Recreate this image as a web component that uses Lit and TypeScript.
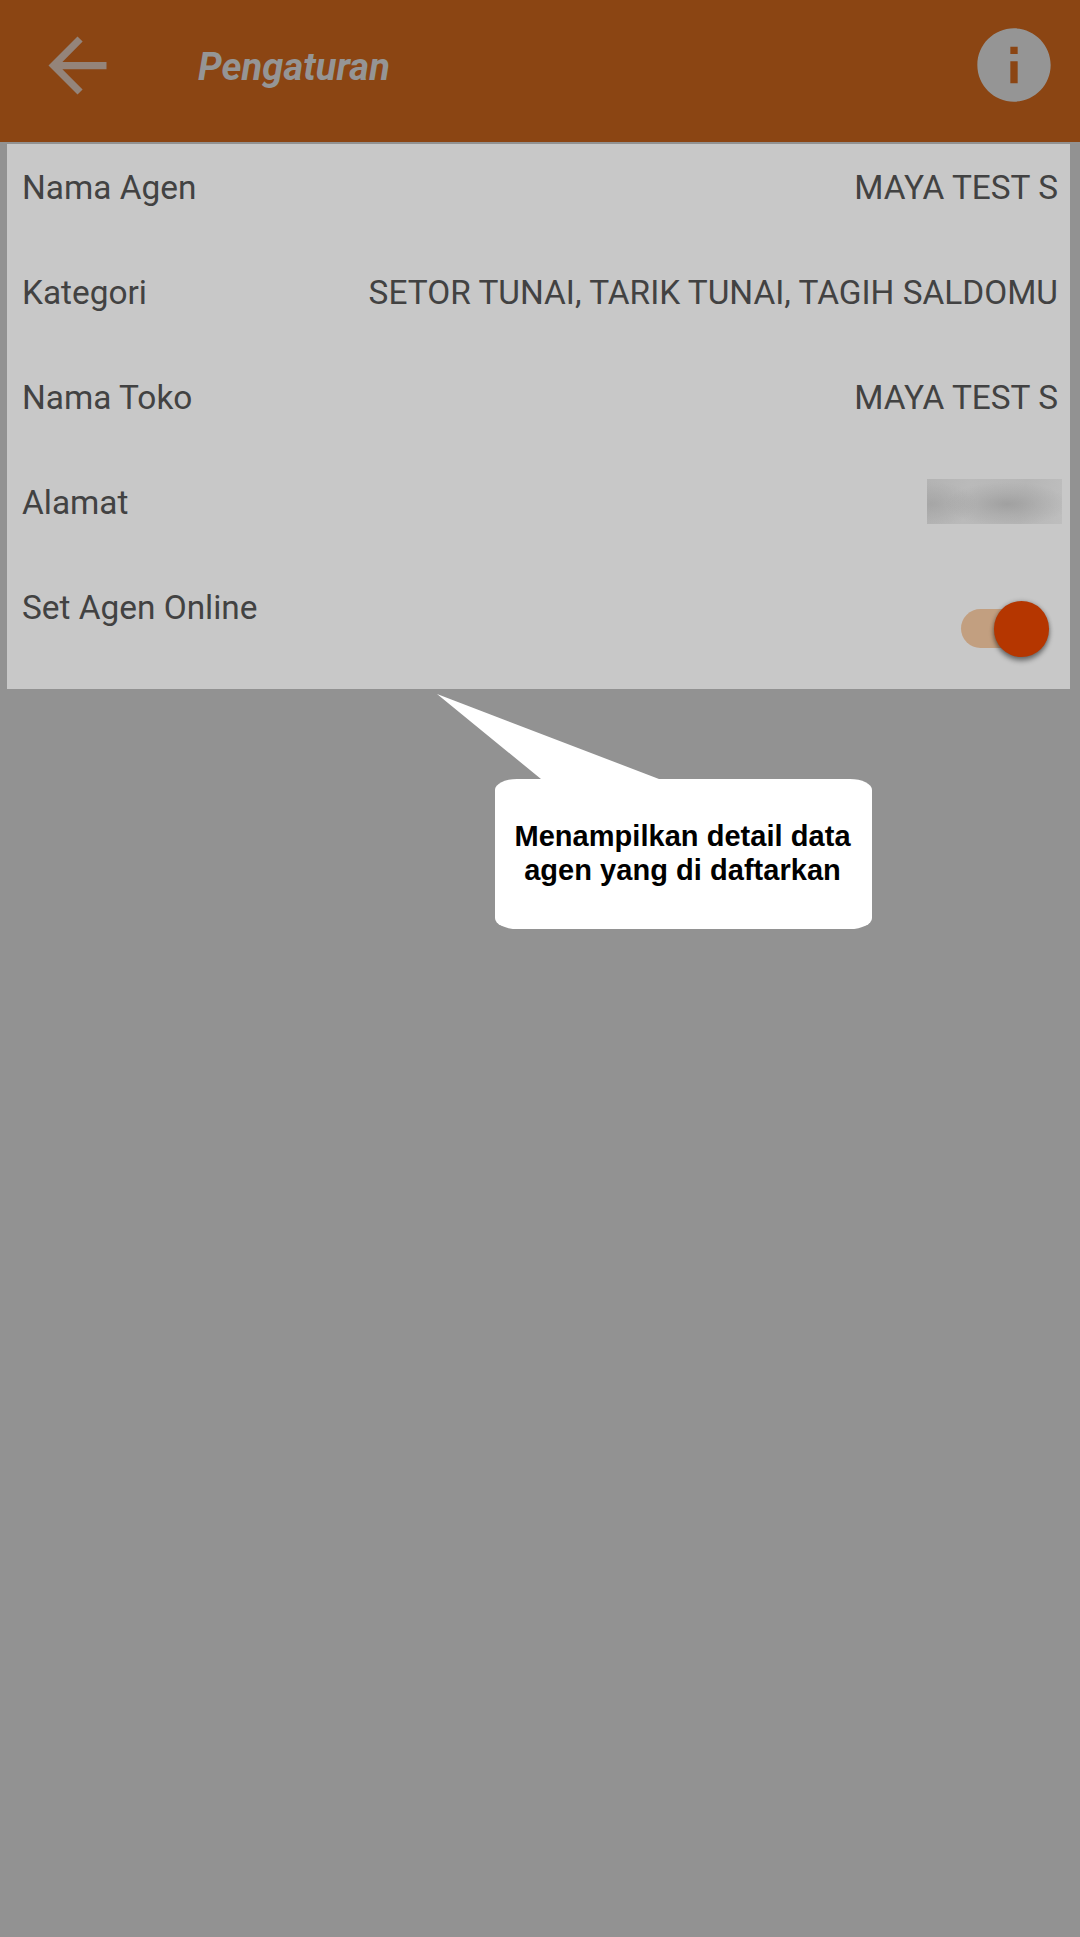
import { LitElement, html, css, nothing } from "lit";
import { customElement, property } from "lit/decorators.js";

type Row = { label: string; value?: string; kind: "text" | "hidden" | "toggle" };

const ROWS: Row[] = [
  { label: "Nama Agen", value: "MAYA TEST S", kind: "text" },
  { label: "Kategori", value: "SETOR TUNAI, TARIK TUNAI, TAGIH SALDOMU", kind: "text" },
  { label: "Nama Toko", value: "MAYA TEST S", kind: "text" },
  { label: "Alamat", kind: "hidden" },
  { label: "Set Agen Online", kind: "toggle" },
];

@customElement("app-bar")
class AppBar extends LitElement {
  static styles = css`
    :host {
      display: flex;
      align-items: center;
      box-sizing: border-box;
      height: 142px;
      padding: 0 22px 12px 34px;
      background: #8b4513;
    }
    .back { width: 87px; height: 87px; fill: #94847a; display: block; }
    .title {
      flex: 1;
      margin: 4px 0 0 77px;
      font: italic 700 38px/44px Roboto, sans-serif;
      letter-spacing: 0.06px;
      color: #959595;
    }
    .info { width: 88px; height: 88px; fill: #959595; display: block; }
  `;
  render() {
    return html`
      <svg class="back" viewBox="0 0 24 24">
        <path d="M20 11H7.83l5.59-5.59L12 4l-8 8 8 8 1.41-1.41L7.83 13H20v-2z" />
      </svg>
      <div class="title">Pengaturan</div>
      <svg class="info" viewBox="0 0 24 24">
        <path d="M12 2C6.48 2 2 6.48 2 12s4.48 10 10 10 10-4.48 10-10S17.52 2 12 2zm1 15h-2v-6h2v6zm0-8h-2V7h2v2z" />
      </svg>
    `;
  }
}

@customElement("detail-row")
class DetailRow extends LitElement {
  @property({ attribute: false }) row!: Row;
  static styles = css`
    :host {
      display: flex;
      justify-content: space-between;
      align-items: flex-start;
      box-sizing: border-box;
      height: 105px;
      padding: 24px 12px 0 15px;
      font: 400 33.4px/40px Roboto, sans-serif;
      color: #424242;
      white-space: nowrap;
    }
    .hidden {
      width: 135px;
      height: 45px;
      margin: -4px -4px 0 0;
      background:
        radial-gradient(ellipse 62px 22px at 80px 25px, rgba(145, 145, 145, 0.6), rgba(150, 150, 150, 0.3) 50%, rgba(160, 160, 160, 0)),
        radial-gradient(ellipse 45px 22px at 5px 25px, rgba(148, 148, 148, 0.45), rgba(155, 155, 155, 0)),
        linear-gradient(100deg, #b3b3b3, #bababa 30%, #b6b6b6 70%, #bebebe);
    }
    .toggle {
      display: flex;
      align-items: center;
      justify-content: flex-end;
      box-sizing: border-box;
      width: 80px;
      height: 39px;
      margin: 21px 17px 0 0;
      border-radius: 20px;
      background: #c29f80;
    }
    .thumb {
      flex: none;
      width: 55.5px;
      height: 55.5px;
      margin: 1px -8px 0 0;
      border-radius: 50%;
      background: #b53600;
      box-shadow: 0 4px 5px rgba(0, 0, 0, 0.4), 0 0 4px rgba(0, 0, 0, 0.25);
    }
  `;
  render() {
    const { label, value, kind } = this.row;
    return html`
      <span>${label}</span>
      ${kind === "text" ? html`<span>${value}</span>` : nothing}
      ${kind === "hidden" ? html`<div class="hidden"></div>` : nothing}
      ${kind === "toggle" ? html`<div class="toggle"><div class="thumb"></div></div>` : nothing}
    `;
  }
}

@customElement("app-root")
class AppRoot extends LitElement {
  static styles = css`
    :host {
      display: block;
      position: relative;
      width: 1080px;
      height: 1937px;
      overflow: hidden;
      background: #929292;
    }
    .card {
      box-sizing: border-box;
      height: 545px;
      margin: 2px 10px 0 7px;
      background: #c8c8c8;
    }
    .tail {
      position: absolute;
      left: 437px;
      top: 694px;
      width: 224px;
      height: 87px;
      fill: #fff;
    }
    .bubble {
      position: absolute;
      left: 495px;
      top: 779px;
      width: 377px;
      height: 150px;
      box-sizing: border-box;
      padding: 40px 2px 0 0;
      border-radius: 22px / 11px;
      background: #fff;
      color: #000;
      text-align: center;
      font: 700 29px/34px "Liberation Sans", Arial, sans-serif;
      letter-spacing: 0.04px;
      white-space: nowrap;
    }
  `;
  render() {
    return html`
      <app-bar></app-bar>
      <div class="card">${ROWS.map((r) => html`<detail-row .row=${r}></detail-row>`)}</div>
      <svg class="tail" viewBox="0 0 224 87"><path d="M0 0L222 85V87H104V85Z" /></svg>
      <div class="bubble">Menampilkan detail data<br />agen yang di daftarkan</div>
    `;
  }
}
